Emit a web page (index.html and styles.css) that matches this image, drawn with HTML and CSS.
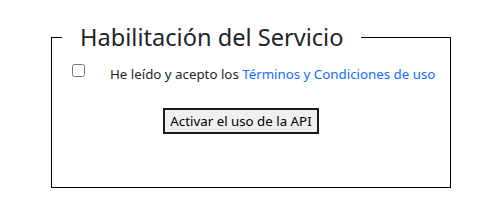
FILE: index.html
```html
<!DOCTYPE html>
<html lang="es">
<head>
    <meta charset="UTF-8">
    <meta name="viewport" content="width=device-width, initial-scale=1.0">
    <title>Habilitación del Servicio</title>
    <link rel="stylesheet" href="styles.css">
</head>
<body>

    <div class="page">
        <fieldset class="service-box">
            <legend>Habilitación del Servicio</legend>

            <div class="terms-row">
                <input type="checkbox" id="terms" class="terms-check">
                <label for="terms" class="terms-label">
                    He leído y acepto los <a href="#">Términos y Condiciones de uso</a>
                </label>
            </div>

            <div class="actions">
                <button type="button" class="btn-activate">Activar el uso de la API</button>
            </div>
        </fieldset>
    </div>

</body>
</html>
```

FILE: styles.css
```css
/* common */
body {
    margin: 0;
    font-family: "Noto Sans", "Open Sans", sans-serif;
    color: #212529;
    background: #ffffff;
}

.page {
    padding: 21px 0 0 51px;
}

/* fieldset */
.service-box {
    box-sizing: border-box;
    width: 400px;
    height: 167px;
    margin: 0;
    padding: 0 10px;
    border: 1px solid #000000;
}

.service-box legend {
    font-size: 23.6px;
    padding: 0 18px;
    color: #212529;
}

/* terms */
.terms-row {
    display: flex;
    align-items: flex-start;
    padding: 9px 0 0 10px;
}

.terms-check {
    width: 13px;
    height: 13px;
    margin: 2px 25px 0 0;
}

.terms-label {
    font-size: 13.3px;
    line-height: 20px;
    margin-top: 2px;
}

.terms-label a {
    color: #0d6efd;
    text-decoration: none;
}

/* button */
.actions {
    padding: 24px 0 0 101px;
}

.btn-activate {
    box-sizing: border-box;
    width: 156px;
    height: 26px;
    font-family: inherit;
    font-size: 13.3px;
    line-height: 18px;
    color: #000000;
    background: #efefef;
    border: 2px solid #1a1a1a;
    padding: 2px 0;
    text-align: center;
}
```
